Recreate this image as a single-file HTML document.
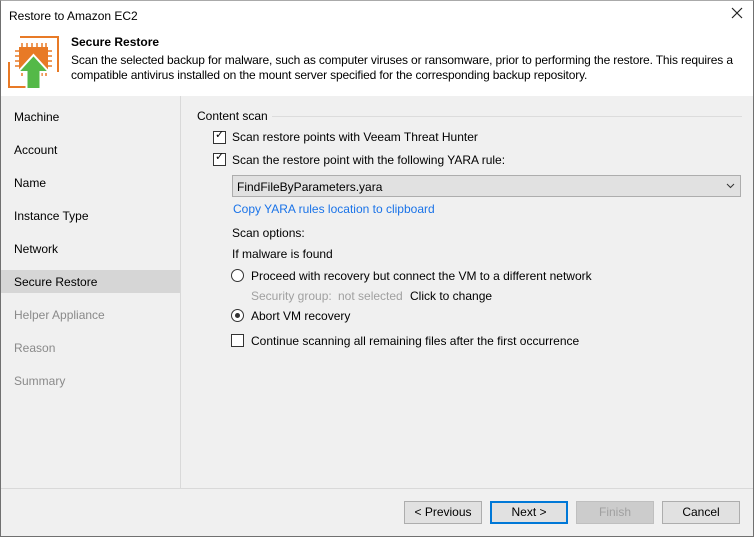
<!DOCTYPE html>
<html><head><style>
*{margin:0;padding:0;box-sizing:border-box}
body{width:754px;height:537px;position:relative;overflow:hidden;font-family:"Liberation Sans",sans-serif;font-size:12px;color:#000;background:#f0f0f0}
.a{position:absolute;white-space:nowrap}
.frame{position:absolute;left:0;top:0;width:754px;height:537px;border:1px solid #707070;border-top:1px solid #aaa}
.cb{position:absolute;width:13px;height:13px;border:1px solid #333;background:#fff}
.rb{position:absolute;width:13px;height:13px;border:1px solid #333;border-radius:50%;background:#fff}
.btn{position:absolute;top:501px;height:23px;width:78px;border:1px solid #adadad;background:#e1e1e1;text-align:center;line-height:21px}
.nav{position:absolute;left:14px}
</style></head><body>
<div class="a" style="left:0;top:0;width:754px;height:96px;background:#fff"></div>
<div class="a" style="left:9px;top:9px">Restore to Amazon EC2</div>
<svg class="a" style="left:731px;top:7px" width="12" height="12"><path d="M1 1L11 11M11 1L1 11" stroke="#222" stroke-width="1.2"/></svg>
<svg class="a" style="left:0;top:30px" width="70" height="66" viewBox="0 30 70 66">
<path d="M20 37H58V72" fill="none" stroke="#e87a26" stroke-width="2"/>
<path d="M9 62V87H30" fill="none" stroke="#e87a26" stroke-width="2"/>
<rect x="19" y="47" width="29" height="26" fill="#e87a26"/>
<g stroke="#e87a26" stroke-width="1.5"><path d="M22 43v4M27 43v4M32 43v4M37 43v4M42 43v4M46 43v4M15 51h4M15 56h4M15 61h4M15 66h4M48 51h4M48 56h4M48 61h4M48 66h4M22 73v3M27 73v3M42 73v3M46 73v3"/></g>
<path d="M33.5 55L49 72H40.5V89H26.5V72H18Z" fill="#54b948" stroke="#fff" stroke-width="2"/>
</svg>
<div class="a" style="left:71px;top:35px;font-weight:bold">Secure Restore</div>
<div class="a" style="left:71px;top:53px;line-height:15px;letter-spacing:-0.15px">Scan the selected backup for malware, such as computer viruses or ransomware, prior to performing the restore. This requires a<br>compatible antivirus installed on the mount server specified for the corresponding backup repository.</div>
<div class="a" style="left:180px;top:96px;width:1px;height:392px;background:#d9d9d9"></div>
<div class="a" style="left:0;top:488px;width:754px;height:1px;background:#d9d9d9"></div>
<div class="a" style="left:1px;top:270px;width:179px;height:23px;background:#d6d6d6"></div>
<div class="a nav" style="top:110px">Machine</div>
<div class="a nav" style="top:143px">Account</div>
<div class="a nav" style="top:176px">Name</div>
<div class="a nav" style="top:209px">Instance Type</div>
<div class="a nav" style="top:242px">Network</div>
<div class="a nav" style="top:275px">Secure Restore</div>
<div class="a nav" style="top:308px;color:#8a8a8a">Helper Appliance</div>
<div class="a nav" style="top:341px;color:#8a8a8a">Reason</div>
<div class="a nav" style="top:374px;color:#8a8a8a">Summary</div>
<div class="a" style="left:197px;top:109px">Content scan</div>
<div class="a" style="left:272px;top:116px;width:470px;height:1px;background:#dcdcdc"></div>
<div class="cb" style="left:213px;top:131px"></div><div class="a" style="left:215px;top:128px;font-size:11px">✓</div>
<div class="a" style="left:232px;top:130px">Scan restore points with Veeam Threat Hunter</div>
<div class="cb" style="left:213px;top:153px"></div><div class="a" style="left:215px;top:150px;font-size:11px">✓</div>
<div class="a" style="left:232px;top:153px">Scan the restore point with the following YARA rule:</div>
<div class="a" style="left:232px;top:175px;width:509px;height:22px;border:1px solid #adadad;background:#e1e1e1"></div>
<div class="a" style="left:237px;top:180px">FindFileByParameters.yara</div>
<svg class="a" style="left:726px;top:183px" width="9" height="6"><path d="M1 1l3.5 3.5L8 1" fill="none" stroke="#333"/></svg>
<div class="a" style="left:233px;top:202px;color:#1a73e8">Copy YARA rules location to clipboard</div>
<div class="a" style="left:232px;top:226px">Scan options:</div>
<div class="a" style="left:232px;top:247px">If malware is found</div>
<div class="rb" style="left:231px;top:269px"></div>
<div class="a" style="left:251px;top:269px">Proceed with recovery but connect the VM to a different network</div>
<div class="a" style="left:251px;top:289px;color:#a0a0a0">Security group:</div>
<div class="a" style="left:338px;top:289px;color:#a0a0a0">not selected</div>
<div class="a" style="left:410px;top:289px">Click to change</div>
<div class="rb" style="left:231px;top:309px"></div><div class="a" style="left:235px;top:313px;width:5px;height:5px;border-radius:50%;background:#333"></div>
<div class="a" style="left:251px;top:309px">Abort VM recovery</div>
<div class="cb" style="left:231px;top:334px"></div>
<div class="a" style="left:251px;top:334px">Continue scanning all remaining files after the first occurrence</div>
<div class="btn" style="left:404px">&lt; Previous</div>
<div class="btn" style="left:490px;border:2px solid #0078d7;line-height:19px">Next &gt;</div>
<div class="btn" style="left:576px;background:#ccc;border-color:#bfbfbf;color:#a0a0a0">Finish</div>
<div class="btn" style="left:662px">Cancel</div>
<div class="frame"></div>
</body></html>
